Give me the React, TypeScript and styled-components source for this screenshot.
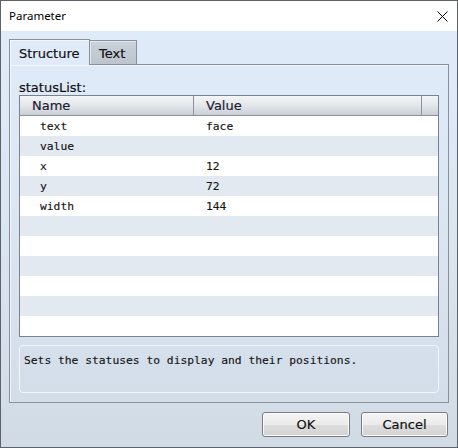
import React from "react";
import styled, { createGlobalStyle } from "styled-components";

const Global = createGlobalStyle`
  html, body { margin: 0; padding: 0; background: #ffffff; }
  * { box-sizing: border-box; }
`;

const UI = `"DejaVu Sans", Verdana, sans-serif`;
const MONO = `"DejaVu Sans Mono", "Liberation Mono", monospace`;

const Window = styled.div`
  width: 458px;
  height: 448px;
  border: 1px solid #5f6368;
  display: flex;
  flex-direction: column;
  background: #ffffff;
`;

const TitleBar = styled.div`
  height: 30px;
  flex: none;
  display: flex;
  align-items: center;
  justify-content: space-between;
  padding: 0 9px 0 8px;
  background: #ffffff;
`;

const Title = styled.span`
  font-family: "Noto Sans", "Liberation Sans", sans-serif;
  font-size: 11.5px;
  color: #000000;
  margin-top: -1px;
`;

const CloseButton = styled.button`
  width: 12px;
  height: 12px;
  padding: 0;
  border: none;
  background: transparent;
  display: flex;
  align-items: center;
  justify-content: center;
`;

const Body = styled.div`
  flex: 1;
  display: flex;
  flex-direction: column;
  padding: 9px 8px 9px 8px;
  background: linear-gradient(to bottom, #e0ebfa 0%, #dbe6f3 45%, #d1dbe6 100%);
`;

const TabStrip = styled.div`
  display: flex;
  align-items: flex-end;
  height: 25px;
  position: relative;
  z-index: 1;
  margin-bottom: -1px;
`;

const Tab = styled.div<{ $active?: boolean; $w: number }>`
  font-family: ${UI};
  font-size: 13px;
  color: #111111;
  -webkit-text-stroke: 0.2px #111111;
  width: ${(p) => p.$w}px;
  height: ${(p) => (p.$active ? "26px" : "25px")};
  padding: ${(p) => (p.$active ? "1px 0 0 9px" : "1px 0 0 9px")};
  display: flex;
  align-items: center;
  border: 1px solid #8a9098;
  border-bottom: ${(p) => (p.$active ? "none" : "1px solid #8a9098")};
  background: ${(p) =>
    p.$active
      ? "#e0ebfa"
      : "linear-gradient(to bottom, #c9d1da 0%, #bcc4cd 100%)"};
  box-shadow: ${(p) => (p.$active ? "inset 1px 1px 0 #f3f7fd" : "inset 1px 1px 0 #e4e9ee")};
  & + & {
    margin-left: -1px;
  }
`;

const Panel = styled.div`
  flex: none;
  height: 339px;
  border: 1px solid #8a9098;
  box-shadow: inset 1px 1px 0 #f1f5fb;
  padding: 14px 9px 9px 9px;
  display: flex;
  flex-direction: column;
`;

const FieldLabel = styled.div`
  font-family: ${UI};
  font-size: 13px;
  line-height: 16px;
  height: 16px;
  padding-top: 1px;
  color: #111111;
  -webkit-text-stroke: 0.2px #111111;
`;

const Table = styled.div`
  border: 1px solid #7c828a;
  background: #ffffff;
  display: flex;
  flex-direction: column;
`;

const HeaderRow = styled.div`
  display: grid;
  grid-template-columns: 174px 228px 1fr;
  height: 20px;
  border-bottom: 1px solid #8c929a;
  background: linear-gradient(to bottom, #f3f5f7 0%, #e3e7eb 50%, #c9cfd6 100%);
`;

const HeaderCell = styled.div<{ $last?: boolean }>`
  font-family: ${UI};
  font-size: 13px;
  color: #1d2033;
  -webkit-text-stroke: 0.2px #1d2033;
  line-height: 19px;
  padding-left: 12px;
  border-right: ${(p) => (p.$last ? "none" : "1px solid #8c929a")};
`;

const Row = styled.div<{ $alt?: boolean }>`
  display: grid;
  grid-template-columns: 174px 228px 1fr;
  height: 20px;
  background: ${(p) => (p.$alt ? "#e3e9f0" : "#ffffff")};
`;

const Cell = styled.div<{ $indent: number }>`
  font-family: ${MONO};
  font-size: 11.3px;
  line-height: 20px;
  padding-top: 1px;
  color: #151515;
  -webkit-text-stroke: 0.15px #151515;
  padding-left: ${(p) => p.$indent}px;
  white-space: pre;
`;

const Description = styled.div`
  margin-top: 8px;
  height: 48px;
  border: 1px solid #f2f6fa;
  border-radius: 4px;
  padding: 7px 4px 0 4px;
  font-family: ${MONO};
  font-size: 11.3px;
  line-height: 16px;
  color: #151515;
  -webkit-text-stroke: 0.15px #151515;
`;

const Footer = styled.div`
  display: flex;
  justify-content: flex-end;
  gap: 11px;
  margin-top: 9px;
  padding-right: 1px;
`;

const Button = styled.button<{ $w: number }>`
  width: ${(p) => p.$w}px;
  height: 25px;
  border: 1px solid #7a7a7a;
  border-radius: 3px;
  background: linear-gradient(to bottom, #f4f4f4 0%, #ebebeb 50%, #dddddd 51%, #d3d3d3 100%);
  box-shadow: inset 0 0 0 1px #fbfbfb;
  font-family: ${UI};
  font-size: 13px;
  color: #111111;
  -webkit-text-stroke: 0.2px #111111;
  padding: 0;
  line-height: 22px;
`;

const rows: [string, string][] = [
  ["text", "face"],
  ["value", ""],
  ["x", "12"],
  ["y", "72"],
  ["width", "144"],
  ["", ""],
  ["", ""],
  ["", ""],
  ["", ""],
  ["", ""],
  ["", ""],
];

export default function App() {
  return (
    <>
      <Global />
      <Window>
        <TitleBar>
          <Title>Parameter</Title>
          <CloseButton aria-label="Close">
            <svg width="11" height="11" viewBox="0 0 11 11">
              <path d="M0.5 0.5 L10.5 10.5 M10.5 0.5 L0.5 10.5" stroke="#000" strokeWidth="1" fill="none" />
            </svg>
          </CloseButton>
        </TitleBar>
        <Body>
          <TabStrip>
            <Tab $active $w={81}>Structure</Tab>
            <Tab $w={48}>Text</Tab>
          </TabStrip>
          <Panel>
            <FieldLabel>statusList:</FieldLabel>
            <Table>
              <HeaderRow>
                <HeaderCell>Name</HeaderCell>
                <HeaderCell>Value</HeaderCell>
                <HeaderCell $last />
              </HeaderRow>
              {rows.map(([n, v], i) => (
                <Row key={i} $alt={i % 2 === 1}>
                  <Cell $indent={20}>{n}</Cell>
                  <Cell $indent={12}>{v}</Cell>
                  <Cell $indent={0} />
                </Row>
              ))}
            </Table>
            <Description>Sets the statuses to display and their positions.</Description>
          </Panel>
          <Footer>
            <Button $w={88}>OK</Button>
            <Button $w={87}>Cancel</Button>
          </Footer>
        </Body>
      </Window>
    </>
  );
}
